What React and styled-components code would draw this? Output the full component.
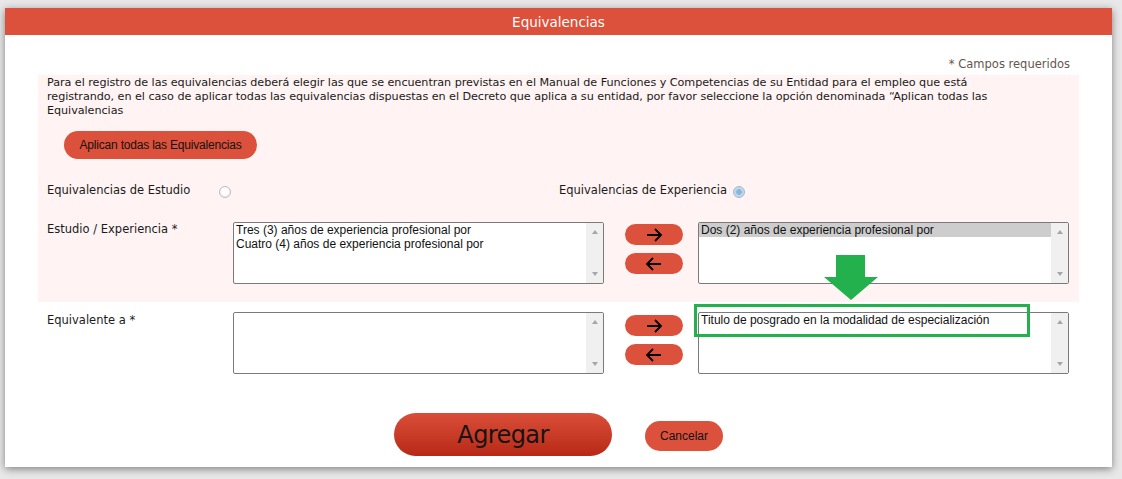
import React from "react";
import styled, { createGlobalStyle } from "styled-components";

const GlobalStyle = createGlobalStyle`
  html, body { margin: 0; padding: 0; }
  body {
    background: #e8e8e8;
    font-family: "DejaVu Sans", Verdana, sans-serif;
    width: 1122px;
    height: 479px;
    overflow: hidden;
  }
`;

const RED = "#dc513b";
const GREEN = "#22b14c";

const Page = styled.div`
  padding: 8px 0 0 5px;
`;

const Panel = styled.div`
  position: relative;
  width: 1107px;
  background: #fff;
  box-shadow: 0 2px 8px rgba(0, 0, 0, 0.45);
`;

const Header = styled.div`
  height: 27px;
  background: ${RED};
  color: #fff;
  font-size: 13.5px;
  line-height: 28px;
  text-align: center;
`;

const Body = styled.div`
  padding: 22px 33px 11px 33px;
`;

const Required = styled.div`
  text-align: right;
  padding-right: 9px;
  font-size: 11.5px;
  line-height: 15px;
  color: #66564f;
  margin-bottom: 3px;
`;

const PinkSection = styled.div`
  background: #fff4f3;
  padding: 1px 10px 18px 9px;
`;

const Intro = styled.p`
  margin: 0;
  font-size: 11.2px;
  line-height: 14px;
  color: #1a1a1a;
  letter-spacing: -0.05px;
  white-space: nowrap;
`;

const PillButton = styled.button`
  display: flex;
  align-items: center;
  justify-content: center;
  border: none;
  background: ${RED};
  color: #111;
  font-family: "Liberation Sans", Arial, sans-serif;
  font-size: 12px;
  padding: 0;
  cursor: pointer;
  width: ${(p) => p.$w}px;
  height: ${(p) => p.$h}px;
  border-radius: ${(p) => p.$h / 2}px;
`;

const AllButton = styled(PillButton)`
  margin: 13px 0 0 17px;
  letter-spacing: -0.2px;
`;

const RadioRow = styled.div`
  display: flex;
  align-items: center;
  height: 16px;
  margin-top: 23px;
  font-size: 11.5px;
  color: #1a1a1a;
`;

const RadioGroup = styled.div`
  display: flex;
  align-items: center;
  width: ${(p) => (p.$w ? `${p.$w}px` : "auto")};
`;

const RadioLabel = styled.span`
  width: ${(p) => (p.$w ? `${p.$w}px` : "auto")};
  margin-right: ${(p) => (p.$w ? 0 : 6)}px;
  white-space: nowrap;
`;

const Radio = styled.span`
  display: inline-block;
  box-sizing: border-box;
  width: 12px;
  height: 12px;
  border-radius: 50%;
  margin-top: 3px;
  border: 1px solid ${(p) => (p.$checked ? "#9db8d0" : "#bcbcbc")};
  background: ${(p) =>
    p.$checked
      ? "radial-gradient(circle at 50% 50%, #8cb4d8 0 2.5px, #b4d2ea 3px, #d8e8f4 100%)"
      : "radial-gradient(circle at 50% 40%, #ffffff 0 3px, #e4e4e4 100%)"};
`;

const FieldRow = styled.div`
  display: grid;
  grid-template-columns: 186px 371px 94px 371px;
  margin-top: ${(p) => p.$top}px;
  margin-left: ${(p) => p.$left || 0}px;
`;

const Label = styled.div`
  font-size: 11.5px;
  line-height: 14px;
  color: #1a1a1a;
  padding-top: ${(p) => p.$pt || 0}px;
`;

const ListBox = styled.div`
  box-sizing: border-box;
  height: 62px;
  border: 1px solid #7a7a7a;
  border-radius: 2px;
  background: #fff;
  display: flex;
  overflow: hidden;
`;

const Options = styled.div`
  flex: 1;
  font-family: "Liberation Sans", Arial, sans-serif;
  font-size: 12px;
  color: #111;
`;

const Option = styled.div`
  height: 14px;
  line-height: 14px;
  padding: 0 2px;
  white-space: nowrap;
  background: ${(p) => (p.$selected ? "#cdcdcd" : "transparent")};
`;

const ScrollBar = styled.div`
  width: 17px;
  background: #f0f0f0;
  display: flex;
  flex-direction: column;
  justify-content: space-between;
  align-items: center;
  padding: 7px 0 7px;
`;

const Tri = styled.span`
  width: 0;
  height: 0;
  border-left: 3.5px solid transparent;
  border-right: 3.5px solid transparent;
  ${(p) =>
    p.$down
      ? "border-top: 4px solid #a6a6a6;"
      : "border-bottom: 4px solid #a6a6a6;"}
`;

const ArrowCol = styled.div`
  display: flex;
  flex-direction: column;
  gap: 8px;
  padding: ${(p) => p.$pt}px 0 0 21px;
`;

const ArrowButton = styled(PillButton)``;

const Actions = styled.div`
  display: flex;
  justify-content: center;
  align-items: center;
  gap: 33px;
  margin-top: 39px;
`;

const AddButton = styled.button`
  width: 218px;
  height: 43px;
  border: none;
  border-radius: 22px;
  background: linear-gradient(#da4e39, #b72916);
  color: #151515;
  font-family: "DejaVu Sans", Verdana, sans-serif;
  font-size: 24px;
  letter-spacing: -0.6px;
  padding: 0;
  cursor: pointer;
`;

const CancelButton = styled(PillButton)`
  margin-top: 3px;
`;

const GreenArrow = styled.svg`
  position: absolute;
  left: 819px;
  top: 247px;
`;

const GreenFrame = styled.div`
  position: absolute;
  left: 689px;
  top: 296px;
  width: 336px;
  height: 33px;
  box-sizing: border-box;
  border: 3px solid ${GREEN};
  pointer-events: none;
`;

const ArrowIcon = ({ dir }) => (
  <svg width="18" height="14" viewBox="0 0 18 14">
    {dir === "right" ? (
      <path d="M2 7H16M10 1L16 7L10 13" fill="none" stroke="#000" strokeWidth="1.8" />
    ) : (
      <path d="M16 7H2M8 1L2 7L8 13" fill="none" stroke="#000" strokeWidth="1.8" />
    )}
  </svg>
);

const List = ({ items = [], selected = -1 }) => (
  <ListBox>
    <Options>
      {items.map((t, i) => (
        <Option key={i} $selected={i === selected}>
          {t}
        </Option>
      ))}
    </Options>
    <ScrollBar>
      <Tri />
      <Tri $down />
    </ScrollBar>
  </ListBox>
);

const Arrows = ({ pt }) => (
  <ArrowCol $pt={pt}>
    <ArrowButton $w={58} $h={21}>
      <ArrowIcon dir="right" />
    </ArrowButton>
    <ArrowButton $w={58} $h={21}>
      <ArrowIcon dir="left" />
    </ArrowButton>
  </ArrowCol>
);

export default function App() {
  return (
    <>
      <GlobalStyle />
      <Page>
        <Panel>
          <Header>Equivalencias</Header>
          <Body>
            <Required>* Campos requeridos</Required>
            <PinkSection>
              <Intro>
                Para el registro de las equivalencias deberá elegir las que se encuentran previstas en el Manual de Funciones y Competencias de su Entidad para el empleo que está
                <br />
                registrando, en el caso de aplicar todas las equivalencias dispuestas en el Decreto que aplica a su entidad, por favor seleccione la opción denominada “Aplican todas las
                <br />
                Equivalencias
              </Intro>
              <AllButton $w={193} $h={28}>
                Aplican todas las Equivalencias
              </AllButton>
              <RadioRow>
                <RadioGroup $w={512}>
                  <RadioLabel $w={172}>Equivalencias de Estudio</RadioLabel>
                  <Radio />
                </RadioGroup>
                <RadioGroup>
                  <RadioLabel>Equivalencias de Experiencia</RadioLabel>
                  <Radio $checked />
                </RadioGroup>
              </RadioRow>
              <FieldRow $top={24}>
                <Label>Estudio / Experiencia *</Label>
                <List
                  items={[
                    "Tres (3) años de experiencia profesional por",
                    "Cuatro (4) años de experiencia profesional por",
                  ]}
                />
                <Arrows pt={2} />
                <List items={["Dos (2) años de experiencia profesional por"]} selected={0} />
              </FieldRow>
            </PinkSection>
            <FieldRow $top={10} $left={9}>
              <Label $pt={1}>Equivalente a *</Label>
              <List />
              <Arrows pt={3} />
              <List items={["Titulo de posgrado en la modalidad de especialización"]} />
            </FieldRow>
            <Actions>
              <AddButton>Agregar</AddButton>
              <CancelButton $w={78} $h={30}>
                Cancelar
              </CancelButton>
            </Actions>
          </Body>
          <GreenArrow width="54" height="45" viewBox="0 0 54 45">
            <polygon points="12,0 41,0 41,22 54,22 27,45 0,22 12,22" fill={GREEN} />
          </GreenArrow>
          <GreenFrame />
        </Panel>
      </Page>
    </>
  );
}
